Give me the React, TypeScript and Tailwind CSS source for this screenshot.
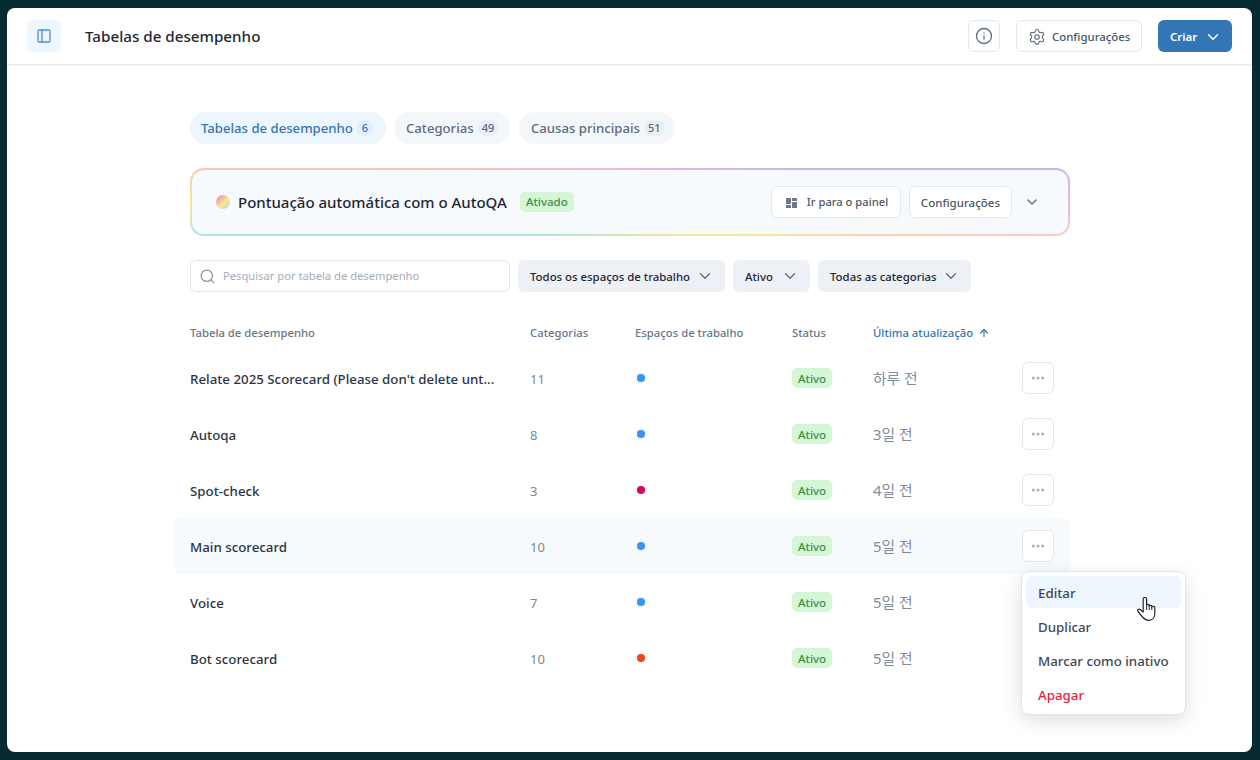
import { ArrowUp, ChevronDown, Info, MoreHorizontal, PanelLeft, Search, Settings } from "lucide-react";

const rows = [
  { name: "Relate 2025 Scorecard (Please don't delete unt...", count: 11, dot: "bg-[#3b93f0]", updated: "하루 전" },
  { name: "Autoqa", count: 8, dot: "bg-[#3b93f0]", updated: "3일 전" },
  { name: "Spot-check", count: 3, dot: "bg-[#d9045f]", updated: "4일 전" },
  { name: "Main scorecard", count: 10, dot: "bg-[#3b93f0]", updated: "5일 전", hover: true },
  { name: "Voice", count: 7, dot: "bg-[#3b93f0]", updated: "5일 전" },
  { name: "Bot scorecard", count: 10, dot: "bg-[#f0431e]", updated: "5일 전" },
];

const Tab = ({ label, count, active, className }: { label: string; count: number; active?: boolean; className: string }) => (
  <div className={`flex h-8 items-center gap-1 rounded-full text-[13.15px] font-medium ${active ? "bg-[#edf5fd] text-[#3375b5]" : "bg-[#f4f7fa] text-[#5c6a80]"} ${className}`}>
    <span className="pt-px">{label}</span>
    <span className={`flex h-4 min-w-4 items-center justify-center rounded-full px-1 pt-px text-[11px] ${active ? "bg-[#dfeefb]" : "bg-[#e9eef3]"}`}>{count}</span>
  </div>
);

const Filter = ({ label, className }: { label: string; className: string }) => (
  <div className={`flex h-8 items-center justify-between rounded-md bg-[#edf1f5] pl-3 pr-[11px] text-[11.4px] font-medium text-[#1f2733] ${className}`}>
    <span className="pt-px">{label}</span>
    <ChevronDown className="size-[18px] text-[#5c6a80]" strokeWidth={1.75} />
  </div>
);

const DashIcon = () => (
  <svg viewBox="0 0 11 10" className="h-[10px] w-[11px] fill-[#6b7789]">
    <rect x="0" y="0" width="5" height="6" rx="0.6" />
    <rect x="0" y="7" width="5" height="3" rx="0.6" />
    <rect x="6" y="0" width="5" height="3" rx="0.6" />
    <rect x="6" y="4" width="5" height="6" rx="0.6" />
  </svg>
);

const HandCursor = () => (
  <svg viewBox="0 0 19 24" className="absolute left-[1130px] top-[589px] h-6 w-[19px]">
    <path
      d="M6.2 2C6.2 0 9.6 0 9.6 2V8C9.6 7 12.2 7 12.2 8.4V9C12.2 8 14.8 8 14.8 9.4V10C14.8 9 17.8 9 17.8 10.6V16.5C17.8 20.5 15.5 23.3 12 23.3C9 23.3 7.5 22.3 5.5 20L1 14.5C0 13 1.8 11.5 3.2 12.5L6.2 15Z"
      fill="#ffffff"
      stroke="#1f2733"
      strokeWidth="1.2"
      strokeLinejoin="round"
    />
    <path d="M9.6 8V13M12.2 8.6V13M14.8 9.6V13" fill="none" stroke="#1f2733" strokeWidth="1" />
  </svg>
);

const App = () => {
  return (
    <div className="h-[760px] w-[1260px] overflow-hidden bg-[#062b30] pb-2 pl-[7px] pr-2 pt-2 font-['Noto_Sans','Noto_Sans_CJK_KR',sans-serif]">
      <div className="relative h-full rounded-lg bg-white">
        <header className="flex h-[57px] items-center border-b border-[#e6e9ed] px-5 shadow-[0_1px_2px_rgba(0,0,0,0.05)]">
          <button className="flex h-8 w-[34px] items-center justify-center rounded-md bg-[#edf5fd]">
            <PanelLeft className="size-4 text-[#4f8fcb]" strokeWidth={2} />
          </button>
          <h1 className="ml-6 text-[15.2px] font-medium text-[#1f2733]">Tabelas de desempenho</h1>
          <div className="ml-auto flex items-center gap-4">
            <button className="flex size-8 items-center justify-center rounded-md border border-[#e2e8f0]">
              <Info className="size-[18px] text-[#5c6a80]" strokeWidth={1.75} />
            </button>
            <button className="flex h-8 w-[126px] items-center gap-1.5 rounded-md border border-[#e2e8f0] pl-[11px] pt-px text-[11.4px] font-medium text-[#4b5869]">
              <Settings className="size-[18px] text-[#5c6a80]" strokeWidth={1.5} />
              Configurações
            </button>
            <button className="flex h-8 w-[74px] items-center gap-[7px] rounded-md bg-[#3375b5] pl-3 pt-px text-[11.5px] font-semibold text-white">
              Criar
              <ChevronDown className="size-[18px]" strokeWidth={2} />
            </button>
          </div>
        </header>

        <main className="ml-[167px] w-[896px] pt-[47px]">
          <div className="ml-4 flex gap-2">
            <Tab label="Tabelas de desempenho" count={6} active className="w-[196px] pl-[11px]" />
            <Tab label="Categorias" count={49} className="w-[117px] pl-3" />
            <Tab label="Causas principais" count={51} className="w-[156px] pl-3" />
          </div>

          <div className="ml-4 mt-6 h-[68px] w-[880px] rounded-[14px] bg-[conic-gradient(#f3b4dc_0deg,#dcb6ea_60deg,#c0b6f5_85deg,#f0b8dc_90deg,#fcc8c0_94deg,#fbe59a_103deg,#d8e8a8_180deg,#b5e6d8_258deg,#a5e6ee_265deg,#fbe59a_270deg,#fcc9a8_274deg,#f9b8d0_289deg,#f3b4dc_360deg)] p-0.5">
            <div className="flex h-full items-center rounded-xl bg-[#f6fafd] pl-6 pr-[28px]">
              <span className="size-[14px] rounded-full bg-[linear-gradient(135deg,#e879c9_0%,#fde68a_55%,#93e0ea_100%)]" />
              <span className="ml-2 text-[15px] font-medium text-[#1f2733]">Pontuação automática com o AutoQA</span>
              <span className="ml-[13px] flex h-5 items-center rounded-[5px] bg-[#d5f7d5] px-1.5 text-[11.5px] font-medium text-[#3f8f4a]">Ativado</span>
              <div className="ml-auto flex items-center gap-2">
                <button className="flex h-8 w-[130px] items-center gap-[10px] rounded-md border border-[#e2e8f0] bg-white pl-[14px] pt-px text-[11.2px] font-medium text-[#4b5869]">
                  <DashIcon />
                  Ir para o painel
                </button>
                <button className="flex h-8 items-center rounded-md border border-[#e2e8f0] bg-white px-[11px] pt-px text-[11.5px] font-medium text-[#4b5869]">Configurações</button>
                <ChevronDown className="ml-1 size-4 text-[#5c6a80]" strokeWidth={2} />
              </div>
            </div>
          </div>

          <div className="ml-4 mt-6 flex gap-2">
            <div className="flex h-8 w-[320px] items-center gap-[7px] rounded-md border border-[#e2e8f0] pl-2 text-[11.2px] text-[#a3aebd]">
              <Search className="size-[17px] text-[#8a97a8]" strokeWidth={1.75} />
              <span className="pt-px">Pesquisar por tabela de desempenho</span>
            </div>
            <Filter label="Todos os espaços de trabalho" className="w-[207px]" />
            <Filter label="Ativo" className="w-[77px]" />
            <Filter label="Todas as categorias" className="w-[153px]" />
          </div>

          <div className="mt-[25px] grid h-8 grid-cols-[340px_105px_157px_81px_1fr] items-center pl-4 text-[11.3px] font-medium text-[#69768a]">
            <span>Tabela de desempenho</span>
            <span>Categorias</span>
            <span>Espaços de trabalho</span>
            <span>Status</span>
            <span className="flex items-center gap-[5px] text-[#3375b5]">
              Última atualização
              <ArrowUp className="size-3" strokeWidth={2.25} />
            </span>
          </div>

          {rows.map((row) => (
            <div key={row.name} className={`mt-px -mb-px grid h-14 grid-cols-[340px_105px_157px_81px_149px_32px] items-center rounded-lg pl-4 ${row.hover ? "bg-[#f6fafd]" : ""}`}>
              <span className="mt-1 whitespace-nowrap text-[13.3px] font-medium text-[#2c3543]">{row.name}</span>
              <span className="mt-1 text-[13px] text-[#7a8698]">{row.count}</span>
              <span className="flex">
                <span className={`ml-0.5 size-[8px] rounded-full ${row.dot} shadow-[0_0_0_2px_#f3f6fa]`} />
              </span>
              <span className="flex">
                <span className="flex h-5 items-center rounded-[5px] bg-[#d5f7d5] px-1.5 pt-px text-[11.5px] font-medium text-[#3f8f4a]">Ativo</span>
              </span>
              <span className="text-[14.8px] text-[#7f8b9b]">{row.updated}</span>
              <button className="flex size-8 items-center justify-center rounded-md border border-[#e2e8f0] bg-white">
                <MoreHorizontal className="size-4 text-[#a3aebd]" strokeWidth={2.5} />
              </button>
            </div>
          ))}
        </main>

        <div className="absolute left-[1014px] top-[563px] w-[165px] rounded-lg border border-[#e2e4e8] bg-white p-1 text-[13.3px] font-medium text-[#3e4858] shadow-[0_6px_20px_rgba(0,0,0,0.13)]">
          <div className="flex h-8 items-center rounded-md bg-[#edf5fd] px-3 pt-1">Editar</div>
          <div className="mt-0.5 flex h-8 items-center px-3 pt-1">Duplicar</div>
          <div className="mt-0.5 flex h-8 items-center px-3 pt-1">Marcar como inativo</div>
          <div className="mt-0.5 flex h-8 items-center px-3 pt-1 text-[#e8213f]">Apagar</div>
        </div>

        <HandCursor />
      </div>
    </div>
  );
};

export default App;
